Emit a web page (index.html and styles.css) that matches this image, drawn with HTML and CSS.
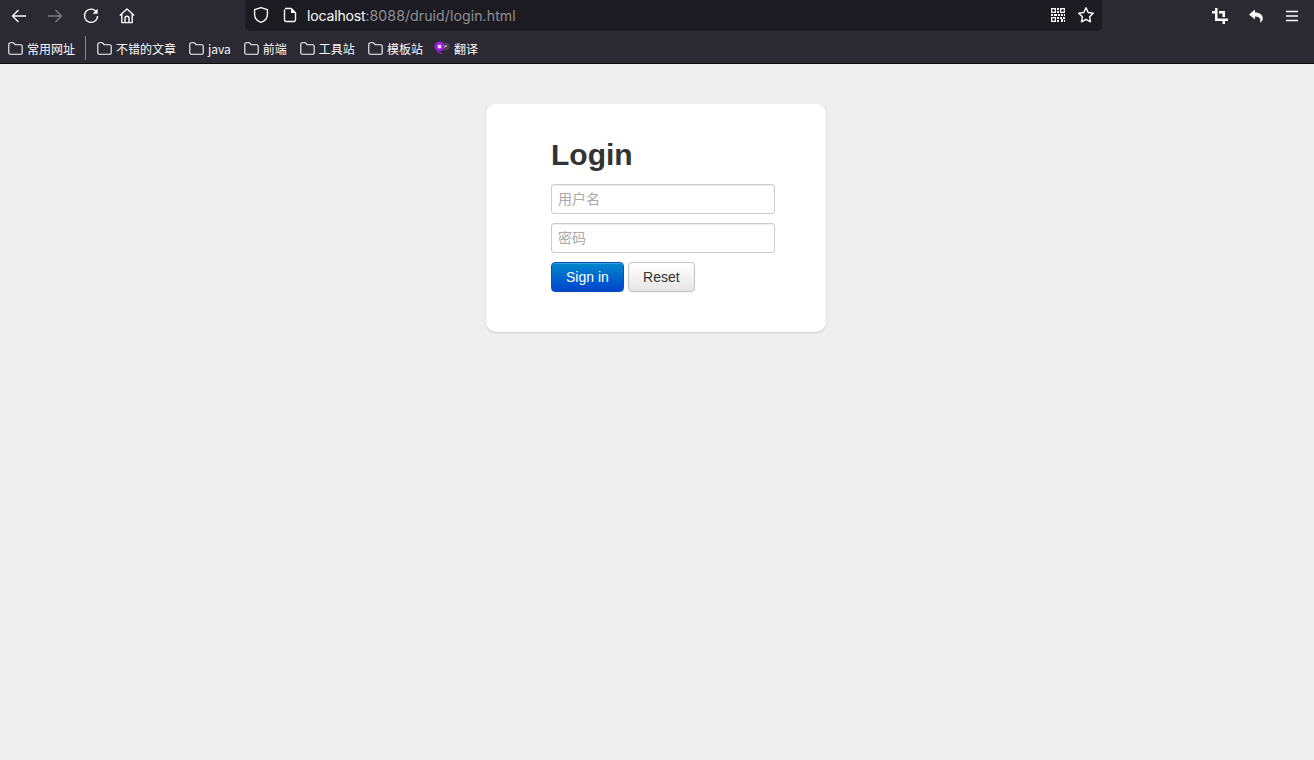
FILE: index.html
```html
<!DOCTYPE html>
<html lang="zh">
<head>
<meta charset="utf-8">
<title>Login</title>
<link rel="stylesheet" href="styles.css">
</head>
<body>
<header class="chrome">
  <div class="toolbar">
    <nav class="nav">
      <span class="tool"><svg width="18" height="18" viewBox="0 0 18 18" class="ico"><path d="M16 9H2.5M8.5 3 2.5 9l6 6"/></svg></span>
      <span class="tool dim"><svg width="18" height="18" viewBox="0 0 18 18" class="ico"><path d="M2 9h13.5M9.5 3l6 6-6 6"/></svg></span>
      <span class="tool"><svg width="18" height="18" viewBox="0 0 18 18" class="ico"><path d="M14.6 5.2A6.6 6.6 0 1 0 15.6 9"/><path class="fill" d="M15.6 1.8v5h-5z"/></svg></span>
      <span class="tool"><svg width="18" height="18" viewBox="0 0 18 18" class="ico"><path d="M1.8 8.6 9 2l7.2 6.6M3.8 7v8.6h10.4V7M7 15.6v-4.4a2 2 0 0 1 4 0v4.4"/></svg></span>
    </nav>
    <div class="urlbar">
      <svg width="18" height="18" viewBox="0 0 18 18" class="ico shield"><path d="M9 1.6 2.6 3.6v5c0 4 3 6.600 6.400 7.800 3.400-1.200 6.400-3.800 6.400-7.800v-5z"/></svg>
      <svg width="14" height="16" viewBox="0 0 14 16" class="ico page"><path d="M2 1.500h6.200L12.500 5.800v7.200a1.500 1.500 0 0 1-1.500 1.500H3A1.500 1.500 0 0 1 1.500 13V2.500"/><path class="fill" d="M8 1.500l4.500 4.500H8z"/></svg>
      <span class="url"><span class="host">localhost</span>:8088/druid/login.html</span>
      <span class="url-actions">
        <svg width="16" height="16" viewBox="0 0 16 16" class="qr"><path fill-rule="evenodd" d="M1 1h5v5H1zM2.300 2.300v2.400h2.400V2.300zM10 1h5v5h-5zM11.300 2.300v2.400h2.400V2.300zM1 10h5v5H1zM2.300 11.300v2.400h2.400v-2.400zM7 1h2v2H7zM7 4h2v2H7zM1 7h2v2H1zM4 7h3v2H4zM8 7h2v2H8zM11 7h2v2h-2zM14 7h1v2h-1zM7 10h2v2H7zM10 10h2v2h-2zM13 10h2v2h-2zM7 13h2v2H7zM11 12h2v3h-2zM14 13h1v2h-1z"/></svg>
        <svg width="18" height="18" viewBox="0 0 18 18" class="ico"><path d="M9 1.800l2.200 4.700 5.100.700-3.700 3.500.9 5.100L9 13.300l-4.500 2.500.9-5.100-3.700-3.500 5.100-.7z"/></svg>
      </span>
    </div>
    <div class="extras">
      <span class="tool"><svg width="16" height="16" viewBox="0 0 16 16" class="solid"><path d="M3 0h2.500v10.500H16V13h-3v3h-2.500v-3H3V5.500H0V3h3zM7 3h6v6h-2.500V5.500H7z"/></svg></span>
      <span class="tool"><svg width="16" height="16" viewBox="0 0 16 16" class="solid"><path d="M7 1.500 1 6.500l6 5v-3c3 0 5 .8 5.300 3.200.1.900-.1 1.900-.5 2.800 1.800-.6 3-2.200 3-4.300C14.800 6.500 11 4.500 7 4.500z"/></svg></span>
      <span class="tool"><svg width="14" height="14" viewBox="0 0 14 14" class="ico thin"><path d="M1 2.500h12M1 7h12M1 11.500h12"/></svg></span>
    </div>
  </div>
  <div class="bookmarks">
    <a class="mark"><svg class="folder" width="15" height="13" viewBox="0 0 15 13"><path d="M2.300.7h3.200l1.600 2h5.600a1.500 1.500 0 0 1 1.500 1.500v6.600a1.500 1.500 0 0 1-1.500 1.500H2.300a1.500 1.500 0 0 1-1.500-1.500V2.200A1.500 1.500 0 0 1 2.300.7z"/></svg>常用网址</a>
    <span class="divider"></span>
    <a class="mark"><svg class="folder" width="15" height="13" viewBox="0 0 15 13"><path d="M2.300.7h3.200l1.600 2h5.600a1.500 1.500 0 0 1 1.500 1.500v6.600a1.500 1.500 0 0 1-1.500 1.500H2.300a1.500 1.500 0 0 1-1.500-1.500V2.200A1.500 1.500 0 0 1 2.300.7z"/></svg>不错的文章</a>
    <a class="mark"><svg class="folder" width="15" height="13" viewBox="0 0 15 13"><path d="M2.300.7h3.200l1.600 2h5.600a1.500 1.500 0 0 1 1.500 1.500v6.600a1.500 1.500 0 0 1-1.500 1.500H2.300a1.500 1.500 0 0 1-1.500-1.500V2.200A1.500 1.500 0 0 1 2.300.7z"/></svg>java</a>
    <a class="mark"><svg class="folder" width="15" height="13" viewBox="0 0 15 13"><path d="M2.300.7h3.200l1.600 2h5.600a1.500 1.500 0 0 1 1.500 1.500v6.600a1.500 1.500 0 0 1-1.500 1.500H2.300a1.500 1.500 0 0 1-1.500-1.500V2.200A1.500 1.500 0 0 1 2.300.7z"/></svg>前端</a>
    <a class="mark"><svg class="folder" width="15" height="13" viewBox="0 0 15 13"><path d="M2.300.7h3.200l1.600 2h5.600a1.500 1.500 0 0 1 1.500 1.500v6.600a1.500 1.500 0 0 1-1.500 1.500H2.300a1.500 1.500 0 0 1-1.500-1.500V2.200A1.500 1.500 0 0 1 2.300.7z"/></svg>工具站</a>
    <a class="mark"><svg class="folder" width="15" height="13" viewBox="0 0 15 13"><path d="M2.300.7h3.200l1.600 2h5.600a1.500 1.500 0 0 1 1.500 1.500v6.600a1.500 1.500 0 0 1-1.500 1.500H2.300a1.500 1.500 0 0 1-1.500-1.500V2.200A1.500 1.500 0 0 1 2.300.7z"/></svg>模板站</a>
    <a class="mark"><svg class="logo" width="16" height="14" viewBox="0 0 16 14"><circle cx="11.500" cy="5.500" r="4" fill="#45444c"/><circle cx="5.500" cy="5.500" r="5" fill="#9a1de0"/><path d="M3.500 10c1 1.800 3 2.800 5 2.400" fill="none" stroke="#9a1de0" stroke-width="1.300"/><rect x="3.800" y="3.800" width="3.400" height="3.400" rx=".6" fill="#f1d9ff"/><path d="M10.300 6.800 11.300 4.200 12 6l.6-1.800" fill="none" stroke="#cfcfd4" stroke-width=".7"/></svg>翻译</a>
  </div>
</header>
<main class="page-body">
  <form class="card">
    <h2 class="title">Login</h2>
    <input class="field" type="text" placeholder="用户名">
    <input class="field" type="password" placeholder="密码">
    <div class="actions">
      <button class="btn primary" type="button">Sign in</button>
      <button class="btn secondary" type="button">Reset</button>
    </div>
  </form>
</main>
</body>
</html>
```

FILE: styles.css
```css
* { box-sizing: border-box; }
html, body { height: 100%; }
body {
  margin: 0;
  background: #eeeeee;
  font-family: "Liberation Sans", "Noto Sans CJK SC", sans-serif;
  overflow: hidden;
}
.chrome {
  height: 64px;
  background: #2b2a33;
  border-bottom: 1px solid #0c0c0d;
  display: flex;
  flex-direction: column;
}
.toolbar { height: 31px; display: flex; }
.nav { display: flex; padding-left: 1px; width: 245px; }
.tool { width: 36px; height: 31px; display: flex; align-items: center; justify-content: center; }
.dim { opacity: .4; }
.ico { fill: none; stroke: #fbfbfe; stroke-width: 1.400; stroke-linejoin: round; }
.ico .fill { fill: #fbfbfe; stroke: none; }
.thin { stroke-width: 1.300; }
.solid { fill: #fbfbfe; }
.qr { fill: #fbfbfe; }
.urlbar {
  width: 857px;
  height: 31px;
  background: #1c1b22;
  border-radius: 0 0 5px 5px;
  display: flex;
  align-items: center;
  padding: 0 7px 1px 7px;
}
.shield { margin-right: 13px; }
.page { margin-right: 10px; }
.url {
  font-family: "Inter", "Liberation Sans", sans-serif;
  font-size: 14.100px;
  letter-spacing: .08px;
  color: #8f8f94;
}
.host { color: #fbfbfe; letter-spacing: -.2px; }
.url-actions { margin-left: auto; display: flex; align-items: center; gap: 11px; }
.extras { display: flex; margin-left: 100px; }
.bookmarks {
  height: 32px;
  display: flex;
  align-items: center;
  padding: 2px 0 0 8px;
  font-size: 12px;
  color: #fbfbfe;
}
.mark { display: flex; align-items: center; gap: 4px; margin-right: 13px; white-space: nowrap; font-family: "Noto Sans CJK SC", "Noto Sans", sans-serif; }
.folder { fill: none; stroke: #fbfbfe; stroke-width: 1.100; flex: none; }
.logo { flex: none; margin-left: -2px; }
.divider { width: 1px; height: 24px; background: #8a8990; margin: 0 11px 0 -3px; }
.page-body { display: flex; justify-content: center; padding: 40px 2px 0 0; }
.card {
  width: 340px;
  height: 228px;
  background: #ffffff;
  border-radius: 10px;
  box-shadow: 0 1px 2px rgba(0, 0, 0, .15);
  padding: 31px 51px 0 65px;
}
.title {
  margin: 0 0 9px;
  font-size: 30px;
  line-height: 40px;
  font-weight: 700;
  color: #333333;
}
.field {
  display: block;
  width: 224px;
  height: 30px;
  margin: 0 0 9px;
  padding: 4px 6px;
  border: 1px solid #cccccc;
  border-radius: 3px;
  box-shadow: inset 0 1px 1px rgba(0, 0, 0, .075);
  font-family: "Liberation Sans", "Noto Sans CJK SC", sans-serif;
  font-size: 14px;
  outline: none;
}
.field::placeholder { color: #a9a9a9; opacity: 1; }
.actions { display: flex; gap: 4px; }
.btn {
  height: 30px;
  padding: 0 14px;
  font-family: "Liberation Sans", sans-serif;
  font-size: 14px;
  color: #333333;
  background: linear-gradient(#ffffff, #e6e6e6);
  border: 1px solid #c4c4c4;
  border-radius: 4px;
  box-shadow: inset 0 1px 0 rgba(255, 255, 255, .2), 0 1px 2px rgba(0, 0, 0, .05);
}
.btn.secondary { width: 67px; padding: 0; }
.btn.primary {
  color: #ffffff;
  background: linear-gradient(#0088cc, #0044cc);
  border-color: #0a4fb8;
}
```
